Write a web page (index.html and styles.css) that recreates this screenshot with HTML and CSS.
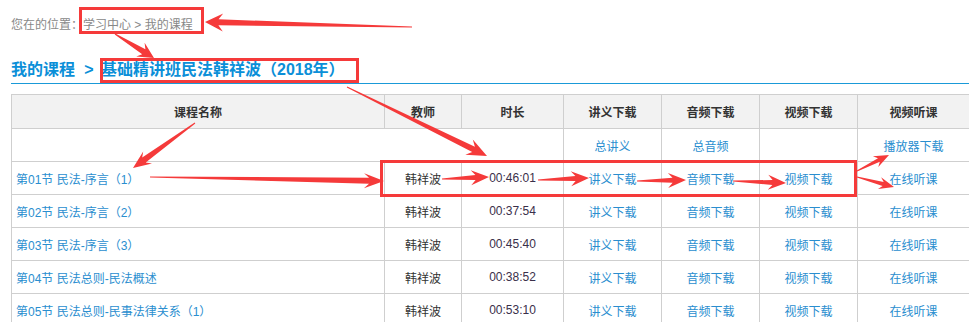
FILE: index.html
```html
<!DOCTYPE html>
<html lang="zh-CN">
<head>
  <meta charset="UTF-8" />
  <title>我的课程</title>
  <link rel="stylesheet" href="styles.css">
</head>
<body>
  <div class="page">
    <div class="crumb">您在的位置：<a href="#">学习中心</a> &gt; <a href="#">我的课程</a></div>
    <h2 class="title">我的课程<span class="sep">&gt;</span>基础精讲班民法韩祥波（2018年）</h2>

    <table class="course-table">
      <colgroup>
        <col style="width:373px"><col style="width:77px"><col style="width:102px">
        <col style="width:98px"><col style="width:98px"><col style="width:98px"><col style="width:112px">
      </colgroup>
      <thead>
        <tr>
          <th>课程名称</th><th>教师</th><th>时长</th><th>讲义下载</th><th>音频下载</th><th>视频下载</th><th>视频听课</th>
        </tr>
      </thead>
      <tbody id="rows">
        <tr>
          <td colspan="3"></td>
          <td><a href="#">总讲义</a></td>
          <td><a href="#">总音频</a></td>
          <td></td>
          <td><a href="#">播放器下载</a></td>
        </tr>
      </tbody>
    </table>
  </div>

  <svg class="marks" id="marks" width="969" height="322" viewBox="0 0 969 322"></svg>

  <script>
    const lessons = [
      ['第01节 民法-序言（1）', '00:46:01'],
      ['第02节 民法-序言（2）', '00:37:54'],
      ['第03节 民法-序言（3）', '00:45:40'],
      ['第04节 民法总则-民法概述', '00:38:52'],
      ['第05节 民法总则-民事法律关系（1）', '00:53:10']
    ];
    const tbody = document.getElementById('rows');
    lessons.forEach(([name, time]) => {
      const tr = document.createElement('tr');
      tr.innerHTML = `
        <td class="name"><a href="#">${name}</a></td>
        <td>韩祥波</td>
        <td class="time">${time}</td>
        <td><a href="#">讲义下载</a></td>
        <td><a href="#">音频下载</a></td>
        <td><a href="#">视频下载</a></td>
        <td><a href="#">在线听课</a></td>`;
      tbody.appendChild(tr);
    });

    // red annotation marks drawn over the page
    const svg = document.getElementById('marks');
    const red = '#f53a3a';

    function box(x1, y1, x2, y2) {
      return `<rect x="${x1 + 1.5}" y="${y1 + 1.5}" width="${x2 - x1 - 3}" height="${y2 - y1 - 3}" fill="none" stroke="${red}" stroke-width="3"/>`;
    }

    function arrow(x1, y1, x2, y2, headLen, headW, shaftW) {
      const dx = x2 - x1, dy = y2 - y1;
      const len = Math.hypot(dx, dy);
      const ux = dx / len, uy = dy / len;
      const nx = -uy, ny = ux;
      const bx = x2 - ux * headLen, by = y2 - uy * headLen;
      const nb = headLen * 0.25;
      const cx = bx + ux * nb, cy = by + uy * nb;
      const pts = [
        [x1 + nx * 0.5, y1 + ny * 0.5],
        [cx + nx * shaftW / 2, cy + ny * shaftW / 2],
        [bx + nx * headW / 2, by + ny * headW / 2],
        [x2, y2],
        [bx - nx * headW / 2, by - ny * headW / 2],
        [cx - nx * shaftW / 2, cy - ny * shaftW / 2],
        [x1 - nx * 0.5, y1 - ny * 0.5]
      ];
      return `<polygon fill="${red}" points="${pts.map(p => p[0].toFixed(1) + ',' + p[1].toFixed(1)).join(' ')}"/>`;
    }

    svg.innerHTML = [
      box(79, 7, 204, 34),
      box(100, 58, 359, 83),
      box(380, 160, 857, 197),
      arrow(412, 27, 205, 22, 18, 18, 6),
      arrow(115, 34, 154, 58, 16, 16, 6),
      arrow(347, 87, 487, 156, 20, 17, 6),
      arrow(195, 123, 133, 168, 18, 15, 6),
      arrow(150, 177, 384, 181, 20, 15, 6),
      arrow(442, 179, 489, 177, 18, 15, 5),
      arrow(538, 180, 589, 178, 18, 15, 5),
      arrow(637, 181, 686, 180, 18, 15, 5),
      arrow(733, 181, 786, 183, 18, 15, 5),
      arrow(857, 171, 889, 155, 15, 12, 4),
      arrow(857, 177, 894, 187, 15, 12, 4)
    ].join('');
  </script>
</body>
</html>
```

FILE: styles.css
```css
* { box-sizing: border-box; margin: 0; padding: 0; }
html, body { width: 969px; height: 322px; overflow: hidden; }
body {
  position: relative;
  background: #fff;
  font-family: "Liberation Sans", "Noto Sans CJK SC", sans-serif;
  font-size: 12px;
  color: #333;
}
a { text-decoration: none; color: #2a8ecf; }

.page {
  padding-left: 11px;
  width: 980px;
}

.crumb {
  padding-top: 17px;
  line-height: 16px;
  color: #888;
}
.crumb a { color: #888; }

.title {
  margin-top: 25px;
  height: 26px;
  line-height: 24px;
  font-size: 16px;
  font-weight: bold;
  color: #0b8fd8;
  border-bottom: 1px solid #1a9ad8;
}
.title .sep {
  display: inline-block;
  width: 12px;
  margin: 0 6px 0 8px;
  text-align: center;
}

.course-table {
  margin-top: 10px;
  width: 958px;
  table-layout: fixed;
  border-collapse: collapse;
}
.course-table th,
.course-table td {
  border: 1px solid #cfcfcf;
  text-align: center;
  vertical-align: middle;
  font-size: 12px;
  white-space: nowrap;
  overflow: hidden;
}
.course-table th {
  height: 34px;
  background: #f2f2f2;
  font-weight: bold;
  color: #333;
}
.course-table td { height: 33px; }
.course-table td.name { text-align: left; padding-left: 4px; }
.course-table td.time { color: #3a2f4a; }

/* annotation overlay */
.marks {
  position: absolute;
  top: 0;
  left: 0;
  pointer-events: none;
}
```
